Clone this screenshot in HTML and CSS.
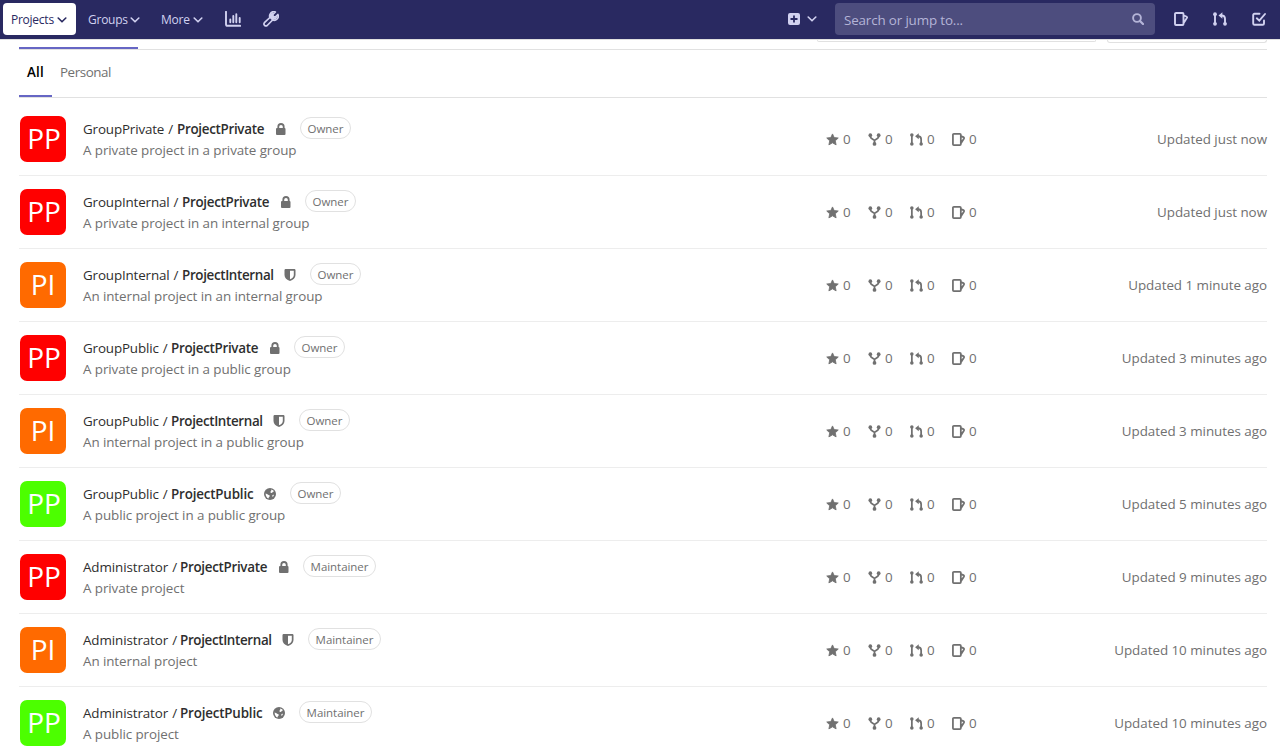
FILE: index.html
```html
<!DOCTYPE html>
<html lang="en">
<head>
<meta charset="utf-8">
<title>Projects</title>
<link rel="stylesheet" href="styles.css">
</head>
<body>
<svg class="sprite" aria-hidden="true">
  <symbol id="chevron" viewBox="0 0 10 6"><path d="M1.200 1l3.800 3.800L8.800 1" fill="none" stroke="currentColor" stroke-width="1.600" stroke-linecap="round" stroke-linejoin="round"/></symbol>
  <symbol id="chart" viewBox="0 0 16 16"><path d="M1 .8v12.400A1.600 1.600 0 0 0 2.600 14.800H15.200M5.300 8.500v2.800M8.300 5v6.300M11.300 3.300v8M14.700 7v4.300" fill="none" stroke="currentColor" stroke-width="1.900" stroke-linecap="round"/></symbol>
  <symbol id="wrench" viewBox="0 0 16 16"><path d="M14.900 3.500L12.500 5.900 10.100 5.700 9.900 3.500 12.400 1C10.200.3 8 1.200 7 3.300 6.500 4.400 6.500 5.500 6.900 6.500L1.400 11.700a2 2 0 0 0 2.800 2.800L9.600 9c1.500.6 3.300.2 4.500-1 1.200-1.300 1.500-3 .8-4.500z" fill="none" stroke="currentColor" stroke-width="1.700" stroke-linejoin="round"/><path d="M7 3.500l3-2.500-.1 3.500 2 2 3.100-1.500-2 3.300-4 1-2.500-2.500z" fill="currentColor"/></symbol>
  <symbol id="plus" viewBox="0 0 12 12"><path fill="currentColor" fill-rule="evenodd" d="M2 0h8a2 2 0 0 1 2 2v8a2 2 0 0 1-2 2H2a2 2 0 0 1-2-2V2a2 2 0 0 1 2-2zm3.100 2.500v2.600H2.500v1.800h2.600v2.600h1.800V6.900h2.600V5.100H6.900V2.500z"/></symbol>
  <symbol id="search" viewBox="0 0 12 12"><g fill="none" stroke="currentColor" stroke-width="1.900"><circle cx="5" cy="5" r="3.900"/><path d="M8 8l3 3" stroke-width="2.300" stroke-linecap="round"/></g></symbol>
  <symbol id="issues" viewBox="0 0 14 14"><path d="M2 1h6.500a1 1 0 0 1 1 1v10a1 1 0 0 1-1 1H2a1 1 0 0 1-1-1V2a1 1 0 0 1 1-1zM9.500 3.300l2.800 1.200c.7.300.9.800.6 1.400L9.500 11.300" fill="none" stroke="currentColor" stroke-width="1.900"/></symbol>
  <symbol id="merge" viewBox="0 0 14 14"><path d="M2 2v10M12 12V6.800C12 4.500 11 3.500 8.500 3.500" fill="none" stroke="currentColor" stroke-width="1.900"/><g fill="currentColor"><circle cx="2" cy="2.200" r="1.900"/><circle cx="2" cy="11.800" r="1.900"/><circle cx="12" cy="11.800" r="1.900"/><path d="M9.400.2v6.600L5.500 3.500z"/></g></symbol>
  <symbol id="todo" viewBox="0 0 14 14"><path d="M7.500 1.800H2.500a1.300 1.300 0 0 0-1.300 1.300v8.300a1.300 1.300 0 0 0 1.300 1.300h8.200a1.300 1.300 0 0 0 1.300-1.300V8.500M4.800 6.300l2.500 2.300L13 2" fill="none" stroke="currentColor" stroke-width="1.900" stroke-linecap="round"/></symbol>
  <symbol id="star" viewBox="0 0 14 14"><path d="M7 1l1.800 3.900 4.400.5-3.200 3 .9 4.400L7 10.600l-3.900 2.200.9-4.400L.8 5.400l4.400-.5z" fill="currentColor" stroke="currentColor" stroke-width=".9" stroke-linejoin="round"/></symbol>
  <symbol id="fork" viewBox="0 0 14 14"><path d="M2.500 2.500v1.300C2.500 5.500 4.500 6.500 7 7.800c2.500-1.300 4.500-2.300 4.500-4V2.500M7 7v5" fill="none" stroke="currentColor" stroke-width="1.900"/><g fill="currentColor"><circle cx="2.500" cy="2.400" r="2"/><circle cx="11.500" cy="2.400" r="2"/><circle cx="7" cy="11.800" r="2"/></g></symbol>
  <symbol id="lock" viewBox="0 0 12 12"><path d="M3.300 6V3.700a2.700 2.700 0 0 1 5.400 0V6" fill="none" stroke="currentColor" stroke-width="1.800"/><rect x="1" y="5" width="9.500" height="7" rx="1" fill="currentColor"/></symbol>
  <symbol id="shield" viewBox="0 0 12 12"><path fill="currentColor" fill-rule="evenodd" d="M1.300 0h9.400l.8.800V6c0 3-2.300 5-5.500 6C2.800 11 .5 9 .5 6V.8zM6 1.700v8.500c2.500-.8 3.800-2.300 3.800-4.200V1.700z"/></symbol>
  <symbol id="earth" viewBox="0 0 12 12"><circle cx="6" cy="6" r="6" fill="currentColor"/><path fill="#fff" d="M7 1.500l2 .7 1 1.100-1.300.7-.7 1-1.300-.2-.4-1 1-.8zM1.600 5.500l1.400.4 1.600 1 1.200.5-.3 1.400-.8.800-.2 1C2.900 10 1.700 8.300 1.600 5.500zM8.400 7l1.600-.3-.6 1.600-1 .7z"/></symbol>
</svg>

<header class="navbar">
  <nav class="nav-left">
    <a class="nav-item active">Projects<svg class="chev"><use href="#chevron"/></svg></a>
    <a class="nav-item groups">Groups<svg class="chev"><use href="#chevron"/></svg></a>
    <a class="nav-item more">More<svg class="chev"><use href="#chevron"/></svg></a>
    <svg class="tool-icon"><use href="#chart"/></svg>
    <svg class="tool-icon"><use href="#wrench"/></svg>
  </nav>
  <div class="nav-right">
    <svg class="plus"><use href="#plus"/></svg>
    <svg class="chev plus-chev"><use href="#chevron"/></svg>
    <div class="search"><span>Search or jump to...</span><svg><use href="#search"/></svg></div>
    <div class="shortcuts">
      <svg><use href="#issues"/></svg>
      <svg><use href="#merge"/></svg>
      <svg><use href="#todo"/></svg>
    </div>
  </div>
</header>

<main class="content">
  <div class="top-tabs">
    <div class="top-tab-active"></div>
    <div class="filters"><div class="filter-search"></div><div class="filter-sort"></div></div>
  </div>
  <nav class="tabs"><a class="tab selected">All</a><a class="tab">Personal</a></nav>
  <ul class="projects" id="projects"></ul>
</main>
<script src="projects.js"></script>
</body>
</html>
```
FILE: projects.js
```js
const projects = [
  ["GroupPrivate", "Private", "Owner", "A private project in a private group", "just now"],
  ["GroupInternal", "Private", "Owner", "A private project in an internal group", "just now"],
  ["GroupInternal", "Internal", "Owner", "An internal project in an internal group", "1 minute ago"],
  ["GroupPublic", "Private", "Owner", "A private project in a public group", "3 minutes ago"],
  ["GroupPublic", "Internal", "Owner", "An internal project in a public group", "3 minutes ago"],
  ["GroupPublic", "Public", "Owner", "A public project in a public group", "5 minutes ago"],
  ["Administrator", "Private", "Maintainer", "A private project", "9 minutes ago"],
  ["Administrator", "Internal", "Maintainer", "An internal project", "10 minutes ago"],
  ["Administrator", "Public", "Maintainer", "A public project", "10 minutes ago"]
];
const icons = { Private: "lock", Internal: "shield", Public: "earth" };
const stat = name => `<span class="stat"><svg><use href="#${name}"/></svg>0</span>`;

document.getElementById("projects").innerHTML = projects.map(([group, level, role, text, time]) => `
  <li class="project">
    <div class="avatar ${level.toLowerCase()}">P${level[0]}</div>
    <div class="details">
      <div class="title"><span class="group ${group.toLowerCase()}">${group} /</span><b class="name ${level.toLowerCase()}">Project${level}</b><svg class="level"><use href="#${icons[level]}"/></svg><span class="role ${role.toLowerCase()}">${role}</span></div>
      <div class="description">${text}</div>
    </div>
    <div class="stats">${["star", "fork", "merge", "issues"].map(stat).join("")}</div>
    <div class="updated">Updated ${time}</div>
  </li>`).join("");
```
FILE: styles.css
```css
* { box-sizing: border-box; }
body { margin: 0; height: 755px; overflow: hidden; background: #fff; color: #2e2e2e; font: 13.4px/20px "Open Sans", "Noto Sans", sans-serif; }
svg { flex: none; display: block; }
.sprite { display: none; }

.navbar { height: 40px; background: linear-gradient(#292961 39px, #dfdfdf 39px); display: flex; justify-content: space-between; color: #d1d1f0; }
.nav-left { display: flex; padding-left: 3px; align-items: center; height: 38px; }
.nav-item { height: 32px; display: flex; align-items: center; justify-content: space-between; font-size: 12px; letter-spacing: -.25px; line-height: 32px; padding-top: 1px; white-space: nowrap; }
.nav-item.active { width: 73px; padding: 1px 9px 0 8px; background: #fff; color: #292961; border-radius: 4px; }
.nav-item.groups { width: 52px; margin-left: 12px; }
.nav-item.more { width: 42px; margin-left: 21px; margin-right: 22px; }
.chev { width: 10px; height: 6px; }
.tool-icon { width: 16px; height: 16px; margin-right: 22px; }
.nav-right { display: flex; align-items: center; height: 38px; padding-right: 14px; }
.plus { width: 12px; height: 12px; margin-right: 7px; }
.plus-chev { margin-right: 18px; }
.search { width: 320px; height: 32px; border-radius: 4px; background: #4d4d7e; color: #b4b4d7; letter-spacing: -.15px; display: flex; align-items: center; justify-content: space-between; padding: 2px 11px 0 9px; }
.search svg { width: 12px; height: 12px; margin-top: -2px; }
.shortcuts { display: flex; gap: 25px; margin-left: 19px; }
.shortcuts svg { width: 14px; height: 14px; }

.content { padding: 0 13px 0 19px; }
.top-tabs { height: 10px; border-bottom: 1px solid #e1e1e1; display: flex; justify-content: space-between; align-items: flex-end; }
.top-tab-active { width: 119px; height: 2px; background: #6666c4; }
.filters { display: flex; gap: 11px; height: 9px; }
.filter-search { width: 279px; height: 2px; border: 1px solid #e1e1e1; border-top: 0; border-radius: 0 0 3px 3px; }
.filter-sort { width: 160px; height: 3px; border: 1px solid #e1e1e1; border-top: 0; border-radius: 0 0 4px 4px; }
.tabs { height: 48px; border-bottom: 1px solid #e1e1e1; display: flex; color: #707070; letter-spacing: -.45px; }
.tab { height: 47px; padding: 12px 8px 0; }
.tab.selected { width: 33px; color: #000; font-weight: 600; letter-spacing: .2px; border-bottom: 2px solid #6666c4; }

.projects { margin: 0; padding: 5px 0 0; list-style: none; }
.project { height: 73px; border-bottom: 1px solid #ededed; padding: 12px 0; display: flex; align-items: center; white-space: nowrap; }
.avatar { width: 46px; height: 46px; margin: 0 17px 0 1px; padding-left: 2px; border-radius: 7px; color: #fff; font: 28px/45px "Open Sans", sans-serif; text-align: center; }
.avatar.internal { padding-left: 0; }
.avatar.private { background: #f00; }
.avatar.internal { background: #ff6a00; }
.avatar.public { background: #4cff00; }
.details { width: 743px; }
.title { height: 22px; display: flex; align-items: center; }
.group { display: block; width: 94px; letter-spacing: -.15px; word-spacing: .8px; }
.group.groupinternal { width: 99px; }
.group.grouppublic { width: 88px; }
.group.administrator { width: 97px; letter-spacing: -.1px; }
.name { display: block; font-weight: 600; width: 87px; letter-spacing: -.3px; }
.name.internal { width: 92px; letter-spacing: -.35px; }
.name.public { width: 83px; letter-spacing: -.18px; }
.level { width: 12px; height: 12px; margin: 0 13px 0 11px; color: #707070; }
.internal + .level, .public + .level { margin: 0 14px 0 10px; }
.role { width: 51px; height: 22px; margin-top: -2px; border: 1px solid #e1e1e1; border-radius: 11px; color: #707070; font-size: 11.5px; line-height: 21px; text-align: center; }
.role.maintainer { width: 73px; letter-spacing: -.05px; }
.description { color: #707070; line-height: 20px; letter-spacing: -.08px; }
.stats { display: flex; color: #707070; }
.stat { width: 42px; display: flex; align-items: center; gap: 4px; }
.stat svg { width: 13px; height: 13px; }
.updated { margin-left: auto; color: #707070; letter-spacing: -.03px; }
```
